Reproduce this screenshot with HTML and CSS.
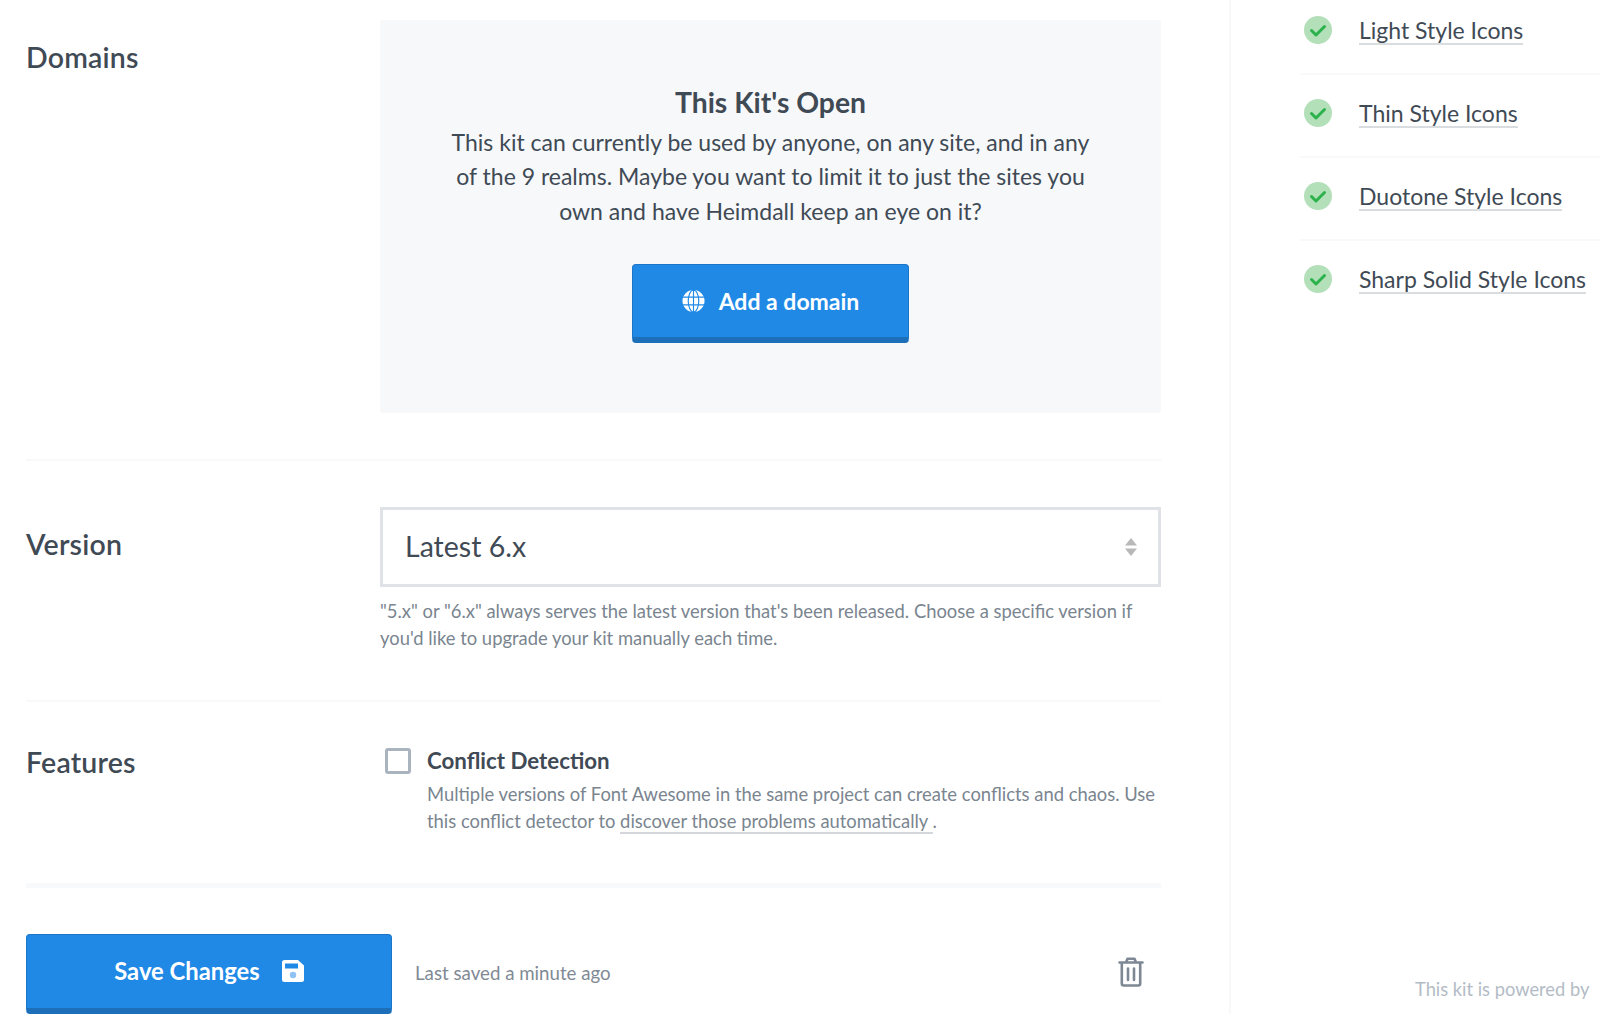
FILE: index.html
```html
<!DOCTYPE html>
<html lang="en">
<head>
<meta charset="utf-8">
<title>Kit Settings</title>
<link rel="stylesheet" href="styles.css">
</head>
<body>
<div class="page">
  <main class="main">
    <section class="row row-domains">
      <h2 class="label">Domains</h2>
      <div class="panel">
        <h3 class="panel-title">This Kit's Open</h3>
        <p class="panel-text">This kit can currently be used by anyone, on any site, and in any of the 9 realms. Maybe you want to limit it to just the sites you own and have Heimdall keep an eye on it?</p>
        <button class="btn btn-add" type="button">
          <svg class="icon-globe" viewBox="0 0 24 24" aria-hidden="true"><circle cx="12" cy="12" r="11.500" fill="#fff"/><g fill="none" stroke="#2089e6" stroke-width="1.200"><ellipse cx="12" cy="12" rx="5.500" ry="11.500"/><path d="M1 8h22M1 16h22M12 0v24"/></g></svg>
          <span>Add a domain</span>
        </button>
      </div>
    </section>
    <section class="row row-version">
      <h2 class="label">Version</h2>
      <div>
        <div class="select">
          <span class="select-value">Latest 6.x</span>
          <svg class="icon-sort" viewBox="0 0 14 20" aria-hidden="true"><path d="M7 1l6 7.500H1zM1 11.500h12L7 19z" fill="#b8b8b8"/></svg>
        </div>
        <p class="help">"5.x" or "6.x" always serves the latest version that's been released. Choose a specific version if you'd like to upgrade your kit manually each time.</p>
      </div>
    </section>
    <section class="row row-features">
      <h2 class="label">Features</h2>
      <div class="feature">
        <span class="checkbox"></span>
        <div>
          <div class="feature-title">Conflict Detection</div>
          <p class="help">Multiple versions of Font Awesome in the same project can create conflicts and chaos. Use this conflict detector to <a class="help-link" href="#">discover those problems automatically </a> .</p>
        </div>
      </div>
    </section>
    <section class="actions">
      <button class="btn btn-save" type="button">
        <span>Save Changes</span>
        <svg class="icon-save" viewBox="0 0 22 22" aria-hidden="true"><path fill-rule="evenodd" d="M2.500 0H16l6 5.500v14a2.500 2.500 0 0 1-2.500 2.500h-17A2.500 2.500 0 0 1 0 19.500v-17A2.500 2.500 0 0 1 2.500 0zM3 3.500v5h13v-5z" fill="#fff"/><circle cx="11" cy="15" r="3.200" fill="#8fc1f5"/></svg>
      </button>
      <span class="saved">Last saved a minute ago</span>
      <svg class="icon-trash" viewBox="0 0 26 30" aria-hidden="true"><g fill="none" stroke="#7d8894" stroke-width="2.600" stroke-linecap="round" stroke-linejoin="round"><path d="M1.500 5.500h23M8 5.500l1.500-3.800h7L18 5.500M3.800 5.500v21a2 2 0 0 0 2 2h14.400a2 2 0 0 0 2-2v-21M10 11.500v11.500M16 11.500v11.500"/></g></svg>
    </section>
  </main>
  <aside class="side">
    <ul class="checks">
      <li class="check"><svg class="icon-check" viewBox="0 0 28 28" aria-hidden="true"><circle cx="14" cy="14" r="14" fill="#b4e0b9"/><path d="M7.500 14.500l4.500 4.500 8.500-8.500" fill="none" stroke="#2bb24c" stroke-width="3" stroke-linecap="round" stroke-linejoin="round"/></svg><a href="#">Light Style Icons</a></li>
      <li class="check"><svg class="icon-check" viewBox="0 0 28 28" aria-hidden="true"><circle cx="14" cy="14" r="14" fill="#b4e0b9"/><path d="M7.500 14.500l4.500 4.500 8.500-8.500" fill="none" stroke="#2bb24c" stroke-width="3" stroke-linecap="round" stroke-linejoin="round"/></svg><a href="#">Thin Style Icons</a></li>
      <li class="check"><svg class="icon-check" viewBox="0 0 28 28" aria-hidden="true"><circle cx="14" cy="14" r="14" fill="#b4e0b9"/><path d="M7.500 14.500l4.500 4.500 8.500-8.500" fill="none" stroke="#2bb24c" stroke-width="3" stroke-linecap="round" stroke-linejoin="round"/></svg><a href="#">Duotone Style Icons</a></li>
      <li class="check"><svg class="icon-check" viewBox="0 0 28 28" aria-hidden="true"><circle cx="14" cy="14" r="14" fill="#b4e0b9"/><path d="M7.500 14.500l4.500 4.500 8.500-8.500" fill="none" stroke="#2bb24c" stroke-width="3" stroke-linecap="round" stroke-linejoin="round"/></svg><a href="#">Sharp Solid Style Icons</a></li>
    </ul>
    <p class="powered">This kit is powered by</p>
  </aside>
</div>
</body>
</html>
```

FILE: styles.css
```css
* { box-sizing: border-box; }
html, body { margin: 0; padding: 0; height: 100%; overflow: hidden; background: #fff; }
body { font-family: "Lato", "Open Sans", sans-serif; color: #3f4a55; }
h2, h3, p, ul { margin: 0; padding: 0; }

.page { display: flex; height: 1014px; }
.main { width: 1231px; flex: none; padding: 20px 68px 0 26px; border-right: 2px solid #f8f9fa; }
.side { flex: 1; position: relative; padding-left: 69px; min-width: 0; overflow: hidden; }

.row { display: grid; grid-template-columns: 354px 781px; border-bottom: 2px solid #f8f9fa; }
.row-domains { height: 441px; }
.row-version { height: 241px; padding-top: 46px; }
.row-features { height: 186px; padding-top: 43px; border-bottom-width: 5px; }

.label { font-size: 28.500px; line-height: 34px; font-weight: 600; letter-spacing: 0.200px; color: #3f4a55; padding-top: 20px; }
.row-features .label { padding-top: 0; }

.panel { height: 393px; background: #f7f8fa; border-radius: 3px; text-align: center; padding: 66px 65px 0; }
.panel-title { font-size: 28.300px; line-height: 32px; font-weight: 700; color: #3f4a55; }
.panel-text { font-size: 23px; line-height: 34.400px; color: #3f4a55; margin-top: 7px; }

.btn { display: flex; align-items: center; justify-content: center; border: 1px solid #1c75c6; border-bottom: 6px solid #1c6fb8; border-radius: 4px; background: #2089e6; color: #fff; font-family: inherit; font-weight: 700; font-size: 23px; height: 79px; padding: 0; }
.btn-add { width: 277px; margin: 36px auto 0; gap: 14px; }
.btn-save { width: 366px; gap: 22px; flex: none; font-size: 23.800px; padding-bottom: 2px; }
.icon-globe { width: 23px; height: 24px; }
.icon-save { width: 22px; height: 22px; }

.select { height: 80px; border: 3px solid #dfe3e8; background: #fff; display: flex; align-items: center; justify-content: space-between; padding: 0 20px 0 22px; font-size: 28.500px; color: #3f4a55; }
.select-value { padding-bottom: 3px; }
.icon-sort { width: 14px; height: 20px; }
.help { font-size: 18.400px; line-height: 27.300px; color: #7a858f; margin-top: 11px; }
.help-link { color: inherit; text-decoration: none; border-bottom: 2px solid #d4d8dc; }

.feature { display: flex; gap: 16px; padding-left: 5px; }
.checkbox { width: 26px; height: 26px; border: 3px solid #aab4bf; border-radius: 3px; flex: none; margin-top: 3px; background: #fff; }
.feature-title { font-size: 22.300px; line-height: 32px; font-weight: 700; color: #3f4a55; }
.feature .help { margin-top: 4px; }

.actions { display: flex; align-items: center; margin-top: 46px; height: 80px; }
.actions .btn { height: 80px; }
.saved { font-size: 18.700px; color: #7f8a95; margin-left: 23px; flex: 1; padding-bottom: 2px; }
.icon-trash { width: 26px; height: 30px; margin-right: 17px; margin-top: -4px; }

.checks { list-style: none; width: 400px; }
.check { display: flex; align-items: center; height: 83px; border-bottom: 2px solid #f8f9fa; padding: 0 0 4px 4px; gap: 27px; }
.check:first-child { height: 75px; padding-bottom: 12px; }
.check:last-child { border-bottom-color: transparent; }
.icon-check { width: 28px; height: 28px; flex: none; margin-top: -2px; }
.check a { font-size: 23px; color: #3f4a55; text-decoration: none; border-bottom: 2px solid #d9dde0; line-height: 26px; white-space: nowrap; }

.powered { position: absolute; left: 184px; top: 977px; font-size: 18.300px; line-height: 24px; color: #b3bcc6; white-space: nowrap; }
```
